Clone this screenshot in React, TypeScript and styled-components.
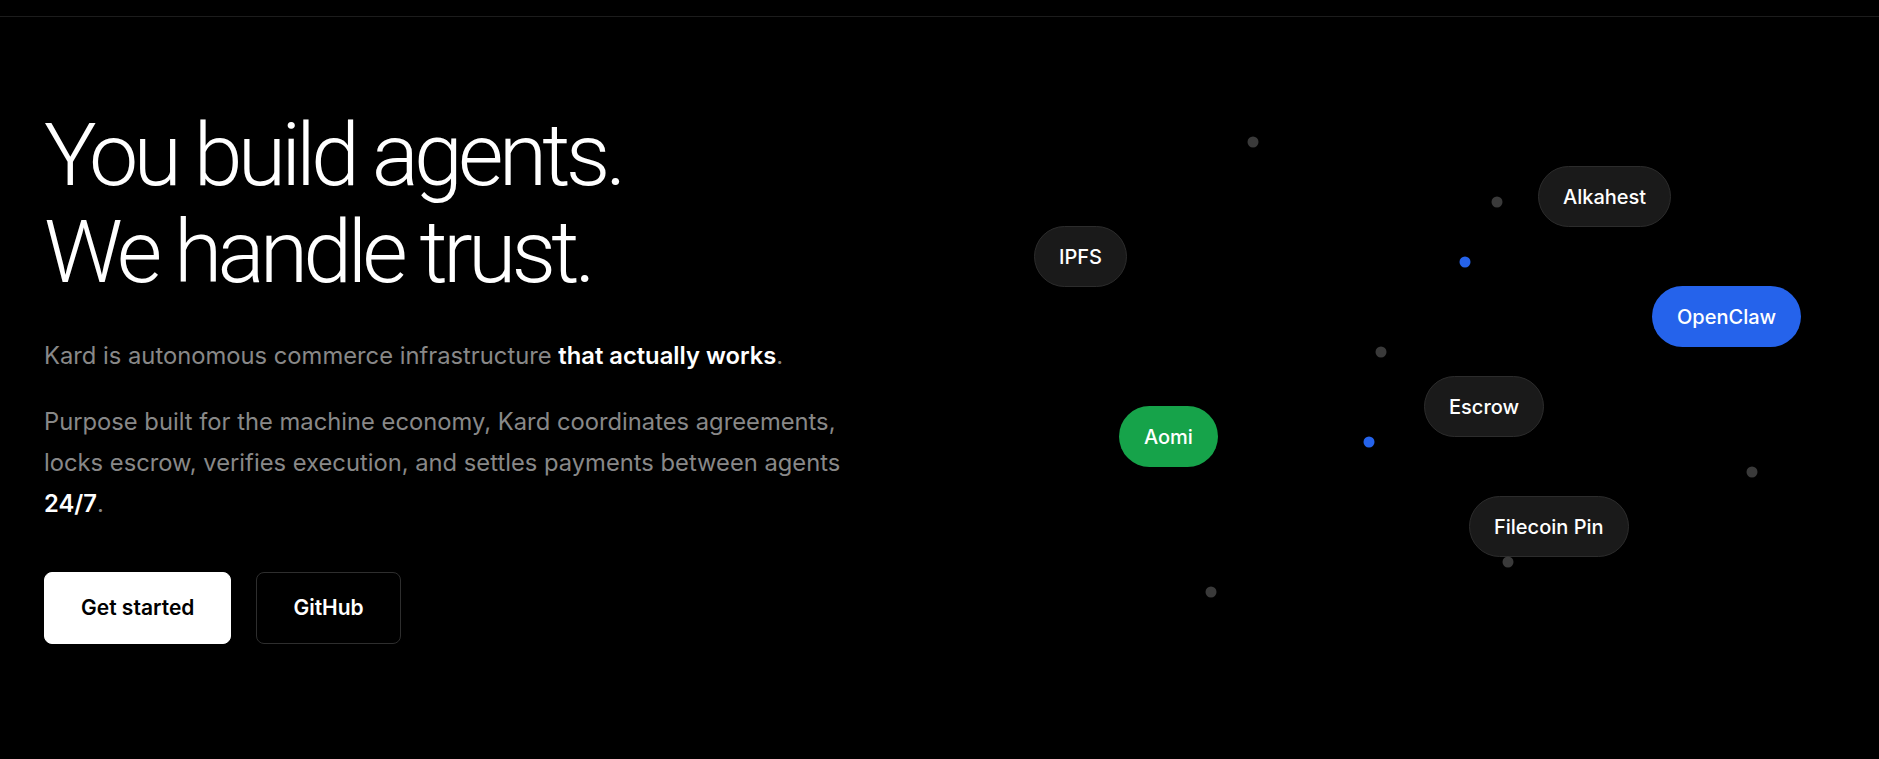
import styled, { createGlobalStyle } from "styled-components";

type NodeTone = "neutral" | "blue" | "green";

type GraphNode = {
  label: string;
  x: number;
  y: number;
  tone: NodeTone;
};

type GraphDot = {
  x: number;
  y: number;
  accent?: boolean;
};

// positions are relative to the canvas (top-left of the right column)
const nodes: GraphNode[] = [
  { label: "IPFS", x: 130, y: 209, tone: "neutral" },
  { label: "Alkahest", x: 634, y: 149, tone: "neutral" },
  { label: "OpenClaw", x: 748, y: 269, tone: "blue" },
  { label: "Escrow", x: 520, y: 359, tone: "neutral" },
  { label: "Aomi", x: 215, y: 389, tone: "green" },
  { label: "Filecoin Pin", x: 565, y: 479, tone: "neutral" },
];

// dot centers
const dots: GraphDot[] = [
  { x: 349, y: 125 },
  { x: 593, y: 185 },
  { x: 561, y: 245, accent: true },
  { x: 477, y: 335 },
  { x: 465, y: 425, accent: true },
  { x: 848, y: 455 },
  { x: 604, y: 545 },
  { x: 307, y: 575 },
];

export default function App() {
  return (
    <>
      <GlobalStyle />
      <Page>
        <TopBar />
        <Hero>
          <Copy>
            <Headline>
              You build agents.
              <br />
              We handle trust.
            </Headline>
            <Lead>
              Kard is autonomous commerce infrastructure{" "}
              <Strong>that actually works</Strong>.
            </Lead>
            <Body>
              Purpose built for the machine economy, Kard coordinates
              agreements, locks escrow, verifies execution, and settles
              payments between agents <Strong>24/7</Strong>.
            </Body>
            <Actions>
              <Button $variant="primary">Get started</Button>
              <Button $variant="outline">GitHub</Button>
            </Actions>
          </Copy>

          <Canvas>
            {nodes.map((node) => (
              <Pill key={node.label} $tone={node.tone} $x={node.x} $y={node.y}>
                {node.label}
              </Pill>
            ))}
            {dots.map((dot, i) => (
              <Dot key={i} $accent={!!dot.accent} $x={dot.x} $y={dot.y} />
            ))}
          </Canvas>
        </Hero>
      </Page>
    </>
  );
}

const GlobalStyle = createGlobalStyle`
  * {
    box-sizing: border-box;
  }

  html,
  body {
    margin: 0;
    padding: 0;
    background: #000;
  }

  body {
    font-family: Inter, "Noto Sans", sans-serif;
    color: #fff;
    -webkit-font-smoothing: antialiased;
  }
`;

const Page = styled.div`
  min-height: 759px;
  background: #000;
  overflow: hidden;
`;

const TopBar = styled.div`
  height: 17px;
  border-bottom: 1px solid #1c1c1c;
`;

const Hero = styled.section`
  display: flex;
  height: 742px;
  padding-left: 44px;
`;

const Copy = styled.div`
  width: 860px;
  flex-shrink: 0;
  padding-top: 90px;
`;

const Headline = styled.h1`
  margin: 0;
  font-family: Roboto, Inter, sans-serif;
  font-size: 88px;
  font-weight: 300;
  line-height: 1.1;
  letter-spacing: -0.055em;
  color: #fff;
`;

const Lead = styled.p`
  margin: 34px 0 0;
  font-size: 23.75px;
  line-height: 41px;
  color: #888;
`;

const Body = styled.p`
  margin: 25px 0 0;
  max-width: 820px;
  font-size: 23.75px;
  line-height: 41px;
  color: #888;
`;

const Strong = styled.strong`
  font-weight: 600;
  color: #fff;
`;

const Actions = styled.div`
  display: flex;
  gap: 25px;
  margin-top: 48px;
`;

const Button = styled.button<{ $variant: "primary" | "outline" }>`
  height: 72px;
  padding: 0 36px;
  border-radius: 8px;
  font-family: inherit;
  font-size: 21px;
  font-weight: 600;
  cursor: pointer;
  border: 1px solid
    ${({ $variant }) => ($variant === "primary" ? "#fff" : "#2e2e2e")};
  background: ${({ $variant }) => ($variant === "primary" ? "#fff" : "#000")};
  color: ${({ $variant }) => ($variant === "primary" ? "#000" : "#fff")};
`;

const Canvas = styled.div`
  position: relative;
  flex: 1;
  height: 100%;
`;

const Pill = styled.div<{ $tone: NodeTone; $x: number; $y: number }>`
  position: absolute;
  left: ${({ $x }) => $x}px;
  top: ${({ $y }) => $y}px;
  display: flex;
  align-items: center;
  height: 61px;
  padding: 0 24px;
  border-radius: 999px;
  font-size: 20px;
  font-weight: 500;
  white-space: nowrap;
  color: #fff;
  border: 1px solid
    ${({ $tone }) => ($tone === "neutral" ? "#2c2c2c" : "transparent")};
  background: ${({ $tone }) => {
    switch ($tone) {
      case "blue":
        return "#2563eb";
      case "green":
        return "#16a34a";
      default:
        return "#1a1a1a";
    }
  }};
`;

const Dot = styled.span<{ $accent: boolean; $x: number; $y: number }>`
  position: absolute;
  left: ${({ $x }) => $x}px;
  top: ${({ $y }) => $y}px;
  width: 11px;
  height: 11px;
  border-radius: 50%;
  transform: translate(-50%, -50%);
  background: ${({ $accent }) => ($accent ? "#2563eb" : "#3a3a3a")};
`;
